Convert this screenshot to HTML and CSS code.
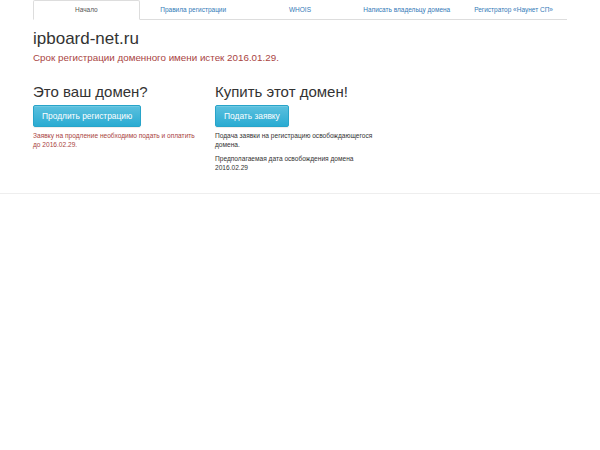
FILE: index.html
```html
<!DOCTYPE html>
<html lang="ru">
<head>
    <meta charset="UTF-8">
    <title>ipboard-net.ru</title>
    <link rel="stylesheet" href="styles.css">
</head>
<body>
    <div class="container">
        <ul class="nav-tabs">
            <li class="active"><a href="#">Начало</a></li>
            <li><a href="#">Правила регистрации</a></li>
            <li><a href="#">WHOIS</a></li>
            <li><a href="#">Написать владельцу домена</a></li>
            <li><a href="#">Регистратор «Наунет СП»</a></li>
        </ul>

        <h1>ipboard-net.ru</h1>
        <p class="lead">Срок регистрации доменного имени истек 2016.01.29.</p>

        <div class="row">
            <div class="col">
                <h2>Это ваш домен?</h2>
                <a class="btn" href="#">Продлить регистрацию</a>
                <p class="note danger">Заявку на продление необходимо подать и оплатить до 2016.02.29.</p>
            </div>
            <div class="col">
                <h2>Купить этот домен!</h2>
                <a class="btn" href="#">Подать заявку</a>
                <p class="note">Подача заявки на регистрацию освобождающегося домена.</p>
                <p class="note">Предполагаемая дата освобождения домена 2016.02.29</p>
            </div>
        </div>
    </div>
    <div class="footer"></div>
</body>
</html>
```

FILE: styles.css
```css
body {
    margin: 0;
    font-family: 'Liberation Sans', Arial, sans-serif;
    font-size: 6.6px;
    line-height: 1.43;
    color: #333;
    background-color: #fff;
}
.container {
    width: 534px;
    margin: 0 auto;
}
.nav-tabs {
    display: flex;
    margin: 0;
    padding: 0;
    list-style: none;
    border-bottom: 1px solid #ddd;
}
.nav-tabs li {
    flex: 1;
    margin-bottom: -1px;
}
.nav-tabs a {
    display: block;
    padding: 5px 0;
    font-size: 6.5px;
    text-align: center;
    color: #337ab7;
    text-decoration: none;
    border: 1px solid transparent;
    border-radius: 2px 2px 0 0;
    line-height: 1.2;
}
.nav-tabs .active a {
    color: #555;
    background-color: #fff;
    border-color: #ddd #ddd transparent;
}
h1 {
    margin: 10px 0 3px;
    font-size: 17px;
    font-weight: normal;
    line-height: 1.1;
}
.lead {
    margin: 0;
    font-size: 9.8px;
    color: #a94442;
}
.row {
    display: grid;
    grid-template-columns: 182px 182px;
    margin-top: 19px;
}
.col {
    padding-right: 14px;
}
h2 {
    margin: 0 0 4px;
    font-size: 15px;
    font-weight: normal;
    line-height: 1.1;
}
.btn {
    display: inline-block;
    padding: 4px 8px;
    font-size: 8.4px;
    line-height: 1.43;
    color: #fff;
    text-decoration: none;
    background-image: linear-gradient(#5bc0de, #2aabd2);
    border: 1px solid #28a4c9;
    border-radius: 2px;
    box-shadow: inset 0 1px 0 rgba(255, 255, 255, 0.15), 0 1px 1px rgba(0, 0, 0, 0.075);
}
.note {
    margin: 4px 0 0;
}
.danger {
    color: #a94442;
}
.footer {
    margin-top: 20px;
    border-top: 1px solid #eee;
}
```
